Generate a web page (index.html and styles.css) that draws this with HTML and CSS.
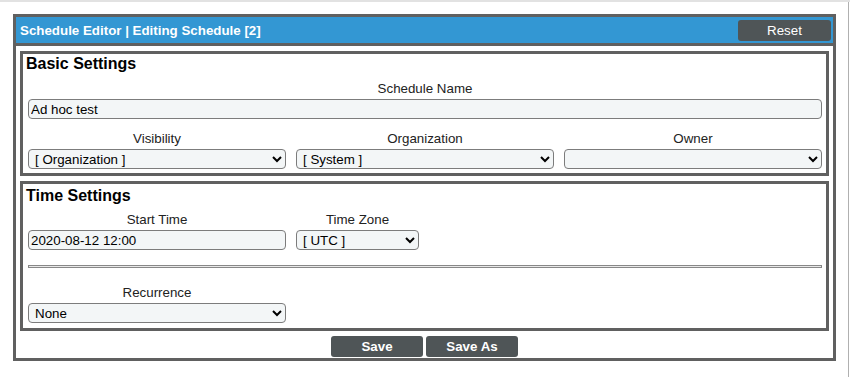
FILE: index.html
```html
<!DOCTYPE html>
<html lang="en">
<head>
  <meta charset="UTF-8" />
  <title>Schedule Editor</title>
  <link rel="stylesheet" href="styles.css">
</head>
<body>
  <div class="page">
    <div class="editor">
      <div class="editor-header">
        <span class="editor-title">Schedule Editor | Editing Schedule [2]</span>
        <button class="btn btn-reset">Reset</button>
      </div>

      <div class="editor-body">
        <div class="section section-basic">
          <h2>Basic Settings</h2>
          <div class="field">
            <label for="schedName">Schedule Name</label>
            <input type="text" id="schedName" value="Ad hoc test" />
          </div>
          <div class="row-three">
            <div class="field">
              <label>Visibility</label>
              <select><option>[ Organization ]</option></select>
            </div>
            <div class="field">
              <label>Organization</label>
              <select><option>[ System ]</option></select>
            </div>
            <div class="field">
              <label>Owner</label>
              <select><option></option></select>
            </div>
          </div>
        </div>

        <div class="section section-time">
          <h2>Time Settings</h2>
          <div class="row-time">
            <div class="field col-wide">
              <label>Start Time</label>
              <input type="text" value="2020-08-12 12:00" />
            </div>
            <div class="field col-zone">
              <label>Time Zone</label>
              <select><option>[ UTC ]</option></select>
            </div>
          </div>
          <hr class="divider" />
          <div class="field col-wide recurrence">
            <label>Recurrence</label>
            <select><option>None</option></select>
          </div>
        </div>

        <div class="actions">
          <button class="btn">Save</button>
          <button class="btn">Save As</button>
        </div>
      </div>
    </div>
  </div>
</body>
</html>
```

FILE: styles.css
```css
body {
  margin: 0;
  font-family: 'Liberation Sans', Arial, sans-serif;
  font-size: 13.33px;
  color: #222;
  background: #fff;
  border-top: 2px solid #e2e2e2;
}

.page {
  width: 849px;
  min-height: 375px;
  border-right: 1px solid #b0b0b0;
  padding-top: 12px;
  box-sizing: border-box;
}

.editor {
  width: 823px;
  margin-left: 13px;
  border: 3px solid #606060;
  box-sizing: border-box;
}

.editor-header {
  display: flex;
  justify-content: space-between;
  align-items: center;
  height: 26px;
  padding: 0 2px 0 4px;
  background: #3397d3;
  border-bottom: 3px solid #606060;
}

.editor-title {
  color: #fff;
  font-weight: 700;
  font-size: 13.33px;
}

.btn {
  width: 92px;
  height: 21px;
  padding: 0;
  border: none;
  border-radius: 3px;
  background: #4f5557;
  color: #fff;
  font-family: 'Liberation Sans', Arial, sans-serif;
  font-size: 13.33px;
  font-weight: 700;
  cursor: pointer;
}

.btn-reset {
  width: 93px;
  margin-top: 1px;
  font-weight: 400;
}

.editor-body {
  padding: 5px 4px 1px;
}

.section {
  border: 3px solid #606060;
  padding: 1px 4px 5px 5px;
  margin-bottom: 5px;
}

.section h2 {
  margin: 0 0 8px -2px;
  font-size: 16px;
  line-height: 18px;
  color: #000;
}

.field label {
  display: block;
  text-align: center;
  line-height: 15px;
  margin-bottom: 3px;
}

.field input,
.field select {
  display: block;
  width: 100%;
  height: 20px;
  box-sizing: border-box;
  border: 1px solid #7c7c7c;
  border-radius: 4px;
  background-color: #f3f6f7;
  color: #000;
  font-family: 'Liberation Sans', Arial, sans-serif;
  font-size: 13.33px;
}

.field input {
  padding: 0 2px;
}

.field select {
  padding: 0 0 0 2px;
}

.section-basic {
  padding-bottom: 4px;
}

.row-three {
  display: grid;
  grid-template-columns: 1fr 1fr 1fr;
  column-gap: 10px;
  margin-top: 12px;
}

.section-time {
  padding-top: 3px;
}

.section-time h2 {
  margin-bottom: 7px;
}

.row-time {
  display: flex;
  gap: 10px;
}

.col-wide {
  width: 258px;
}

.col-zone {
  width: 123px;
}

.divider {
  margin: 15px 0 0;
  height: 1px;
  border: 1px solid #888;
  background: #e8e8e8;
}

.recurrence {
  margin-top: 17px;
}

.actions {
  display: flex;
  justify-content: center;
  gap: 3px;
}
```
